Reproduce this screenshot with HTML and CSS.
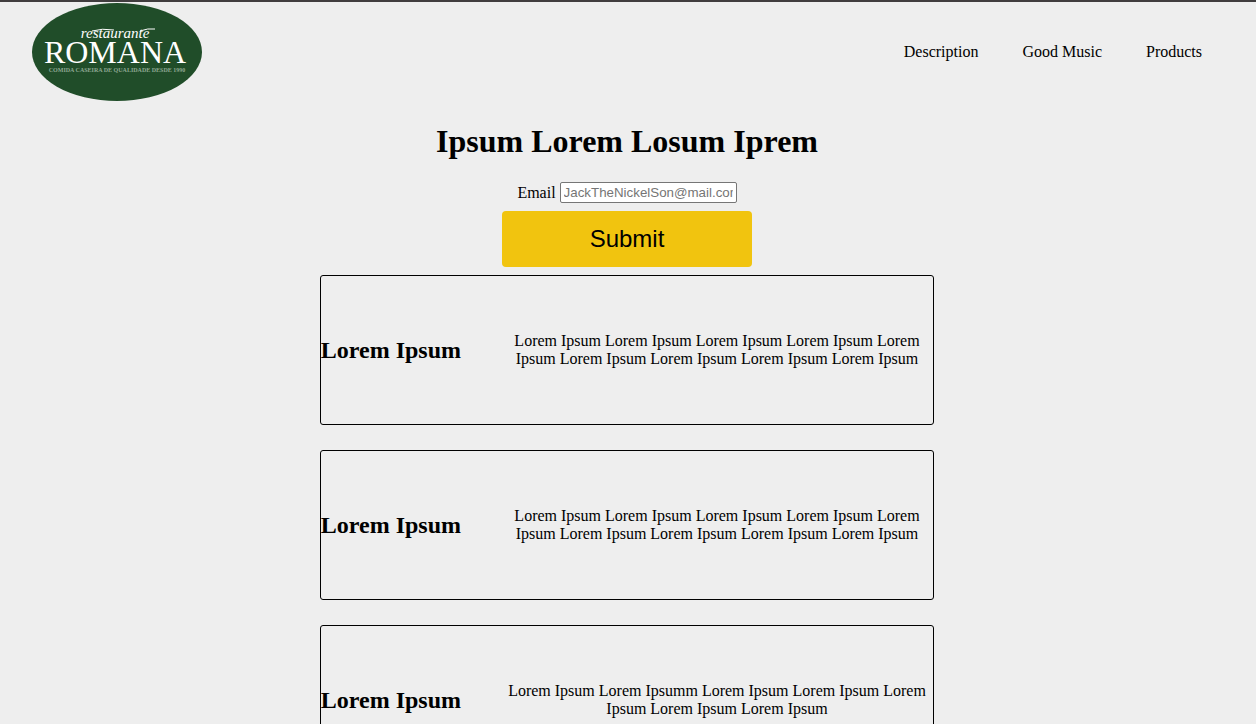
FILE: index.html
```html
<!DOCTYPE html>
<html lang="en">
<head>
<meta charset="utf-8">
<meta name="viewport" content="width=device-width, initial-scale=1">
<title>Restaurante Romana</title>
<link rel="stylesheet" href="styles.css">
</head>
<body class="page">
<header class="header">
  <svg class="logo" viewBox="0 0 170 98" role="img" aria-label="Restaurante Romana">
    <ellipse class="logo-disc" cx="85" cy="49" rx="85" ry="49"/>
    <text class="logo-script" x="83" y="35">restaurante</text>
    <path class="logo-swash" d="M60 28Q70 25 82 27M108 28Q116 25 123 26"/>
    <text class="logo-name" x="83" y="60">ROMANA</text>
    <text class="logo-tagline" x="85" y="69">COMIDA CASEIRA DE QUALIDADE DESDE 1990</text>
  </svg>
  <nav class="nav">
    <a class="nav-link" href="#description">Description</a>
    <a class="nav-link" href="#music">Good Music</a>
    <a class="nav-link" href="#products">Products</a>
  </nav>
</header>
<main class="main">
  <h1 class="title">Ipsum Lorem Losum Iprem</h1>
  <form class="form">
    <div class="field">
      <label for="email">Email</label>
      <input class="email" id="email" type="email" placeholder="JackTheNickelSon@mail.com">
    </div>
    <button class="submit" type="submit">Submit</button>
  </form>
  <div class="cards" id="description">
    <section class="card">
      <h2 class="card-title">Lorem Ipsum</h2>
      <p class="card-text">Lorem Ipsum Lorem Ipsum Lorem Ipsum Lorem Ipsum Lorem Ipsum Lorem Ipsum Lorem Ipsum Lorem Ipsum Lorem Ipsum</p>
    </section>
    <section class="card" id="music">
      <h2 class="card-title">Lorem Ipsum</h2>
      <p class="card-text">Lorem Ipsum Lorem Ipsum Lorem Ipsum Lorem Ipsum Lorem Ipsum Lorem Ipsum Lorem Ipsum Lorem Ipsum Lorem Ipsum</p>
    </section>
    <section class="card" id="products">
      <h2 class="card-title">Lorem Ipsum</h2>
      <p class="card-text">Lorem Ipsum Lorem Ipsumm Lorem Ipsum Lorem Ipsum Lorem Ipsum Lorem Ipsum Lorem Ipsum</p>
    </section>
  </div>
</main>
</body>
</html>
```

FILE: styles.css
```css
* {
  box-sizing: border-box;
}

html {
  scrollbar-width: none;
}

.page {
  margin: 0;
  padding-right: 2px;
  border-top: 2px solid #403d3e;
  background: #eee;
  color: #000;
  font: 16px/18px "Liberation Serif", "Times New Roman", serif;
}

.header {
  display: flex;
  align-items: center;
  justify-content: space-between;
  padding: 1px 52px 0 32px;
}

.logo {
  width: 170px;
  height: 98px;
}

.logo-disc {
  fill: #204d29;
}

.logo-script,
.logo-name,
.logo-tagline {
  fill: #fff;
  text-anchor: middle;
}

.logo-script {
  font-size: 15px;
  font-style: italic;
}

.logo-swash {
  fill: none;
  stroke: #fff;
}

.logo-name {
  font-size: 32px;
}

.logo-tagline {
  font-size: 6px;
  font-weight: bold;
  fill: #8fa893;
}

.nav {
  display: flex;
  flex-wrap: wrap;
  gap: 44px;
}

.nav-link {
  color: inherit;
  text-decoration: none;
}

.main {
  display: flex;
  flex-direction: column;
  align-items: center;
  padding: 22px 0;
}

.title {
  margin: 0 0 22px;
  font-size: 32px;
  line-height: 37px;
  text-align: center;
}

.form {
  display: flex;
  flex-direction: column;
  align-items: center;
  gap: 8px;
}

.field {
  display: flex;
  align-items: center;
  gap: 4px;
}

.email {
  width: 177px;
  height: 21px;
  padding: 1px 3px;
  border: 1px solid #767676;
  border-radius: 2px;
  background: #fff;
  font-family: "Liberation Sans", Arial, sans-serif;
}

.email::placeholder {
  color: #757575;
}

.submit {
  width: 250px;
  height: 56px;
  border: 0;
  border-radius: 4px;
  background: #f1c40f;
  color: #000;
  font: 24px "Liberation Sans", Arial, sans-serif;
}

.cards {
  display: flex;
  flex-direction: column;
  gap: 25px;
  width: 49%;
  margin-top: 8px;
}

.card {
  display: grid;
  grid-template-columns: 180px 1fr;
  align-items: center;
  min-height: 150px;
  border: 1px solid #000;
  border-radius: 3px;
}

.card-title {
  margin: 0;
  font-size: 24px;
  line-height: 28px;
}

.card-text {
  margin: 0;
  text-align: center;
}
```
